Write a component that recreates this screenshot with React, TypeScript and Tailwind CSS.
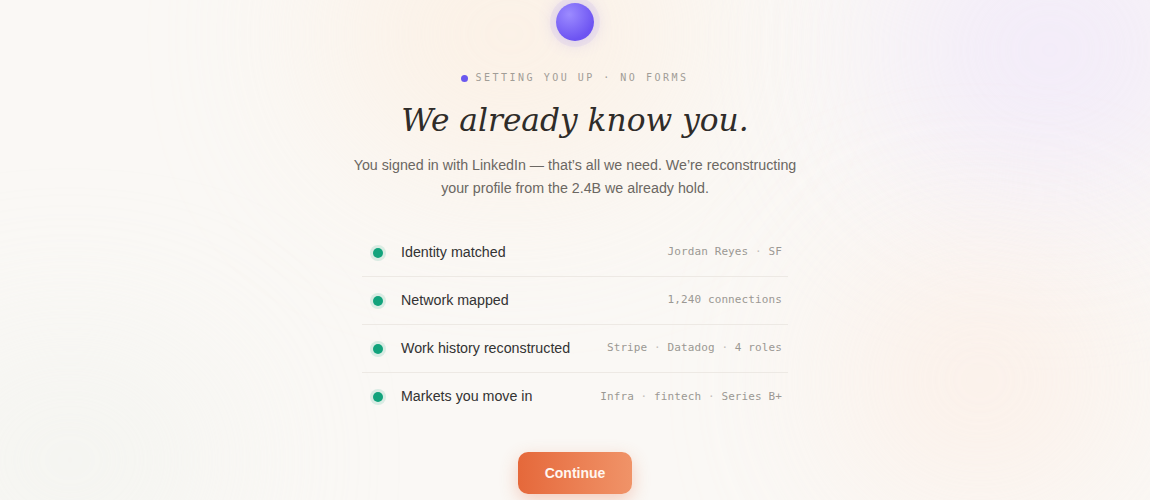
import { ReactNode } from 'react';

type Step = {
  label: string;
  detail: ReactNode;
};

const Dot = () => <span className="text-[#c4c0ba]">·</span>;

const steps: Step[] = [
  { label: 'Identity matched', detail: <>Jordan Reyes <Dot /> SF</> },
  { label: 'Network mapped', detail: <>1,240 connections</> },
  { label: 'Work history reconstructed', detail: <>Stripe <Dot /> Datadog <Dot /> 4 roles</> },
  { label: 'Markets you move in', detail: <>Infra <Dot /> fintech <Dot /> Series B+</> },
];

function StepRow({ step, last }: { step: Step; last: boolean }) {
  return (
    <li
      className={`flex items-center h-12 pl-[11px] pr-[6px] ${last ? '' : 'border-b border-[#ede9e4]'}`}
    >
      <span className="w-[10px] h-[10px] rounded-full bg-[#12a37c] shadow-[0_0_0_3px_rgba(18,163,124,0.14)] shrink-0" />
      <span className="ml-[18px] text-[14.25px] text-[#333333] font-['Liberation_Sans',Arial,sans-serif]">
        {step.label}
      </span>
      <span className="ml-auto text-[11px] text-[#9b9893] font-['DejaVu_Sans_Mono',monospace] tracking-[0.01em]">
        {step.detail}
      </span>
    </li>
  );
}

export default function App() {
  return (
    <div className="relative w-full min-h-[500px] overflow-hidden bg-[#faf8f5]">
      {/* soft tinted blobs behind the content */}
      <div className="absolute -top-24 left-[330px] w-[360px] h-[260px] rounded-full bg-[#fdebd9] opacity-60 blur-[90px]" />
      <div className="absolute -top-20 right-[-60px] w-[320px] h-[260px] rounded-full bg-[#efe6fb] opacity-80 blur-[90px]" />
      <div className="absolute top-[270px] right-[40px] w-[260px] h-[220px] rounded-full bg-[#fdeadf] opacity-70 blur-[90px]" />
      <div className="absolute top-[360px] left-[-80px] w-[300px] h-[200px] rounded-full bg-[#eef1ec] opacity-60 blur-[90px]" />

      <div className="relative flex flex-col items-center pt-[3px]">
        <div className="w-[38px] h-[38px] rounded-full bg-[radial-gradient(circle_at_35%_30%,#9c8bff,#6d54f2_70%)] shadow-[0_0_0_6px_rgba(124,102,245,0.07),0_0_18px_rgba(124,102,245,0.3)]" />

        <div className="mt-[31px] flex items-center gap-[7px] text-[10px] leading-3 tracking-[0.25em] text-[#a19d97] font-['DejaVu_Sans_Mono',monospace]">
          <span className="w-[7px] h-[7px] rounded-full bg-[#6a58ef]" />
          <span>SETTING YOU UP · NO FORMS</span>
        </div>

        <h1 className="mt-[14px] text-[31.25px] leading-[44px] italic text-[#2f2c29] font-['DejaVu_Serif',Georgia,serif]">
          We already know you.
        </h1>

        <p className="mt-[12px] text-center text-[14.25px] leading-[23px] text-[#6b6762] font-['Liberation_Sans',Arial,sans-serif]">
          You signed in with LinkedIn — that’s all we need. We’re reconstructing
          <br />
          your profile from the 2.4B we already hold.
        </p>

        <ul className="mt-[29px] w-[426px]">
          {steps.map((s, i) => (
            <StepRow key={s.label} step={s} last={i === steps.length - 1} />
          ))}
        </ul>

        <button className="mt-[31px] w-[114px] h-[42px] rounded-[10px] bg-gradient-to-r from-[#e5683a] to-[#f09368] text-[#fff6f0] text-[14px] font-bold font-['Liberation_Sans',Arial,sans-serif] shadow-[0_6px_18px_rgba(229,104,58,0.3)]">
          Continue
        </button>
      </div>
    </div>
  );
}
